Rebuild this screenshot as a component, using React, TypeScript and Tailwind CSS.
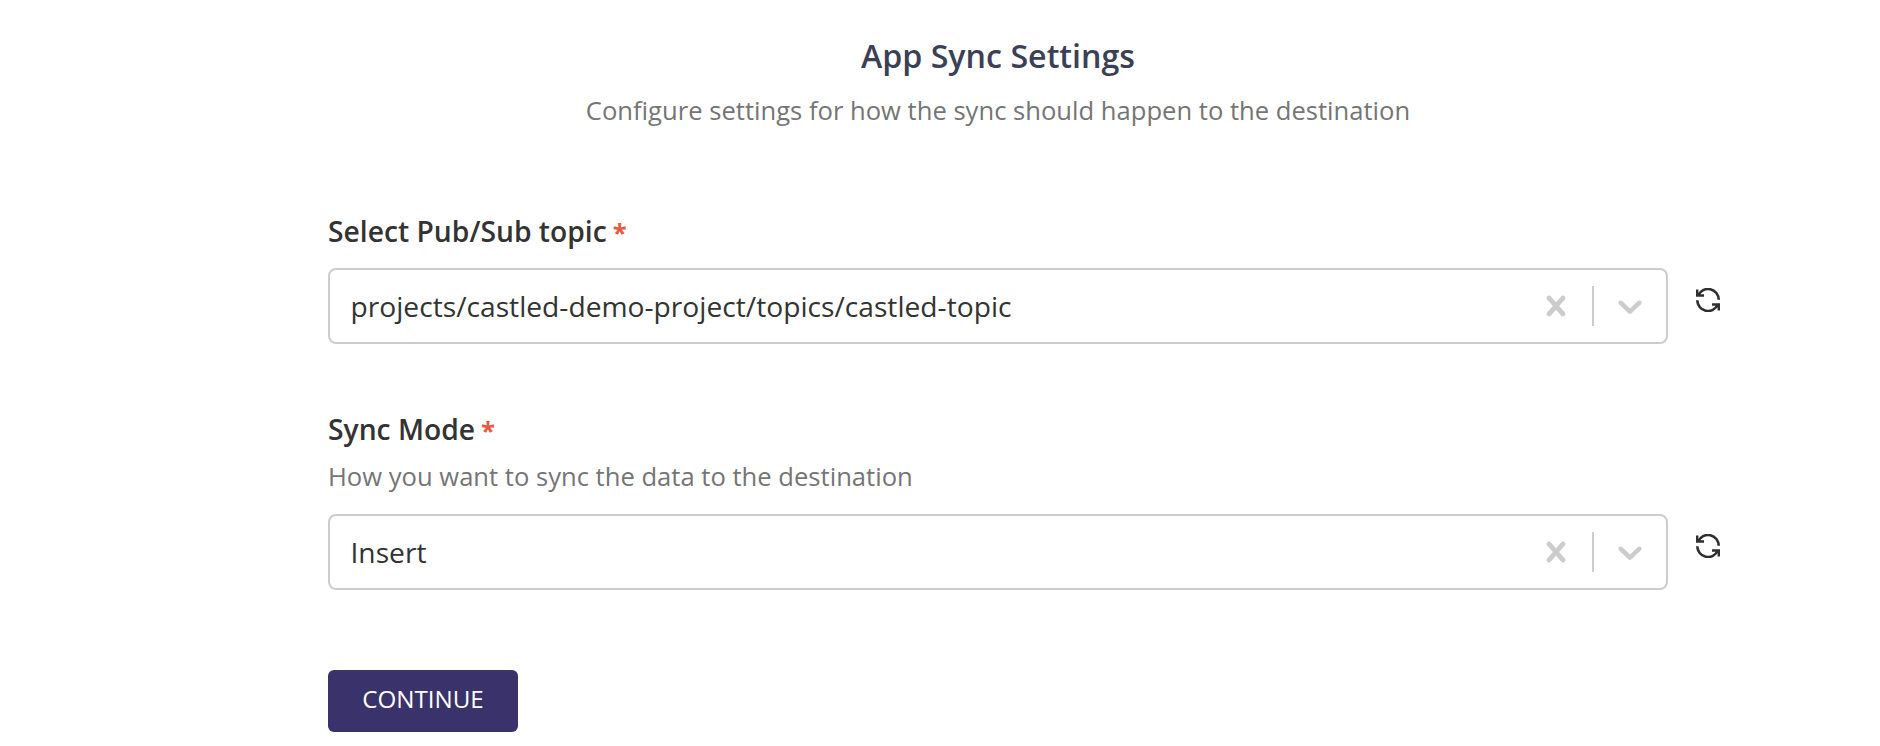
import React from "react";

function RefreshIcon() {
  return (
    <svg viewBox="0 0 24 24" className="h-6 w-6" fill="none" stroke="#2f2f2f" strokeWidth="2.6">
      <path d="M2.2 7.4A10.7 10.7 0 0 1 22.7 11.8" />
      <path d="M21.8 16.6A10.7 10.7 0 0 1 1.3 12.2" />
      <path d="M0 1.5H2.4V4.6L4.4 6.3H8V8.8H0Z" fill="#2f2f2f" stroke="none" />
      <path d="M24 22.5H21.6V19.4L19.6 17.7H16V15.2H24Z" fill="#2f2f2f" stroke="none" />
    </svg>
  );
}

function SelectBox({ value }: { value: string }) {
  return (
    <div className="flex items-start">
      <div className="flex h-[76px] w-[1340px] items-center rounded-[8px] border-2 border-[#cccccc] pl-[20.5px]">
        <span className="flex-1 text-[28.2px] leading-[40px] text-[#333333]">{value}</span>
        <svg viewBox="0 0 20 20" className="mr-[16px] h-10 w-10 fill-[#cccccc]">
          <path d="M14.348 14.849c-0.469 0.469-1.229 0.469-1.697 0l-2.651-3.030-2.651 3.029c-0.469 0.469-1.229 0.469-1.697 0-0.469-0.469-0.469-1.229 0-1.697l2.758-3.15-2.759-3.152c-0.469-0.469-0.469-1.228 0-1.697s1.228-0.469 1.697 0l2.652 3.031 2.651-3.031c0.469-0.469 1.228-0.469 1.697 0s0.469 1.229 0 1.697l-2.758 3.152 2.758 3.15c0.469 0.469 0.469 1.229 0 1.698z" />
        </svg>
        <div className="h-10 w-0.5 bg-[#cccccc]" />
        <svg viewBox="0 0 20 20" className="mx-4 h-10 w-10 fill-[#cccccc]">
          <path d="M4.516 7.548c0.436-0.446 1.043-0.481 1.576 0l3.908 3.747 3.908-3.747c0.533-0.481 1.141-0.446 1.574 0 0.436 0.445 0.408 1.197 0 1.615-0.406 0.418-4.695 4.502-4.695 4.502-0.217 0.223-0.502 0.335-0.787 0.335s-0.570-0.112-0.789-0.335c0 0-4.287-4.084-4.695-4.502s-0.436-1.17 0-1.615z" />
        </svg>
      </div>
      <div className="ml-7 mt-[20px]"><RefreshIcon /></div>
    </div>
  );
}

function FieldLabel({ text }: { text: string }) {
  return (
    <label className="flex h-10 items-start text-[28.25px] font-semibold leading-[38px] text-[#333333]">
      {text}
      <span className="ml-[6px] text-[25.6px] font-bold leading-[42px] text-[#e9573f]">*</span>
    </label>
  );
}

export default function App() {
  return (
    <main className="h-[746px] overflow-hidden bg-white pl-[328px] font-['Open_Sans',sans-serif]">
      <header className="flex w-[1340px] flex-col items-center pt-[36px]">
        <h1 className="text-[32.2px] font-semibold leading-[40px] text-[#3a4055]">App Sync Settings</h1>
        <p className="mt-[17px] text-[25.6px] leading-[36px] text-[#757575]">Configure settings for how the sync should happen to the destination</p>
      </header>
      <section className="mt-[83px]">
        <FieldLabel text="Select Pub/Sub topic" />
        <div className="mt-[16px]"><SelectBox value="projects/castled-demo-project/topics/castled-topic" /></div>
      </section>
      <section className="mt-[66px]">
        <FieldLabel text="Sync Mode" />
        <p className="mt-[9px] text-[25.6px] leading-[36px] text-[#757575]">How you want to sync the data to the destination</p>
        <div className="mt-[19px]"><SelectBox value="Insert" /></div>
      </section>
      <button className="mt-[80px] block h-[62px] w-[190px] rounded-[6px] bg-[#39326b] pb-[4px] text-[24.2px] leading-[36px] text-white">CONTINUE</button>
    </main>
  );
}
